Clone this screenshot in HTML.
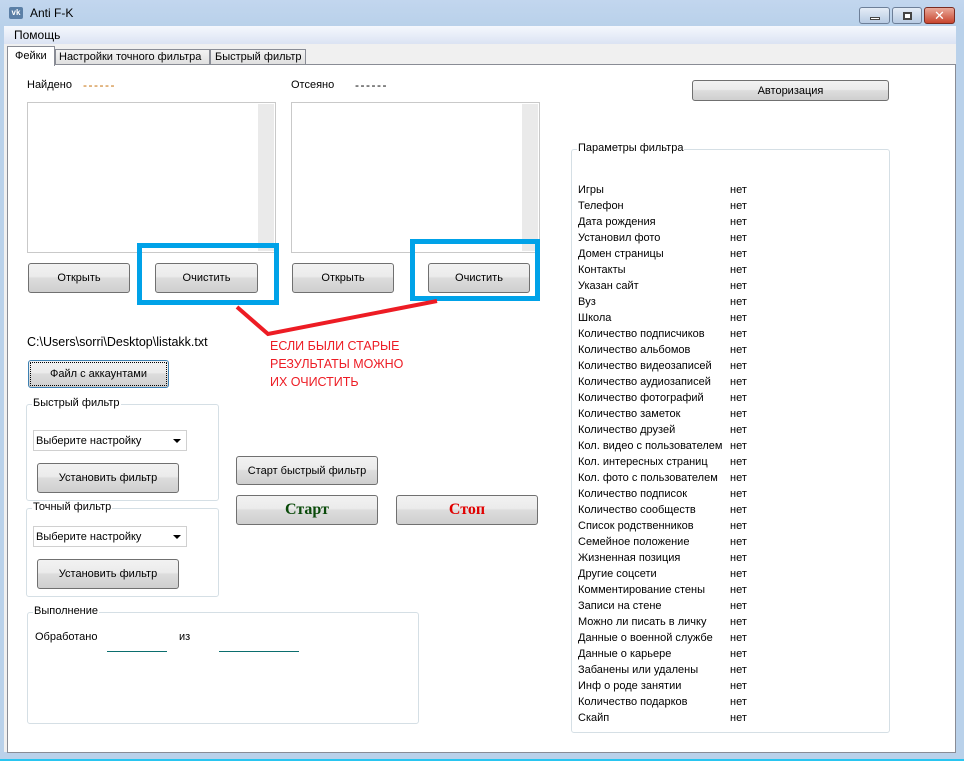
<!DOCTYPE html>
<html><head><meta charset="utf-8"><style>
*{box-sizing:border-box;margin:0;padding:0}
body{width:964px;height:761px;overflow:hidden;background:#b9d1ea;font-family:"Liberation Sans","DejaVu Sans",sans-serif;font-size:11px;color:#000;position:relative}
.a{position:absolute;white-space:nowrap}
.btn{position:absolute;border:1px solid #707070;border-radius:3px;background:linear-gradient(#f2f2f2 0%,#ebebeb 45%,#dddddd 50%,#cfcfcf 100%);display:flex;align-items:center;justify-content:center;font-size:11px;color:#000;white-space:nowrap}
.grp{position:absolute;border:1px solid #d5dfe5;border-radius:3px}
.grp span{position:absolute;top:-8px;left:5px;background:#fff;padding:0 1px;font-size:11px;white-space:nowrap}
.lb{position:absolute;border:1px solid #c9c9c9;background:#fff}
.sb{position:absolute;top:1px;bottom:1px;right:1px;width:16px;background:#eaeaea}
.sel{position:absolute;border:1px solid #d0d0d0;background:#fff;font-size:11px;padding:4px 0 0 2px;white-space:nowrap}
.sel:after{content:"";position:absolute;right:5px;top:8px;border-left:4px solid transparent;border-right:4px solid transparent;border-top:4px solid #000}
.row{position:absolute;left:578px;font-size:11px;white-space:nowrap}
.row b{font-weight:normal;position:absolute;left:152px;top:0}
.blue{position:absolute;border:5px solid #00a2e8}
.red{color:#ed1c24;font-size:12.5px;position:absolute;left:270px;white-space:nowrap}
.dash{letter-spacing:1.5px;font-size:12px}
.tab{position:absolute;top:49px;height:16px;border:1px solid #898c95;background:linear-gradient(#f3f3f3,#e0e0e0);font-size:11px;padding:1px 0 0 3px;white-space:nowrap;overflow:hidden}
</style></head><body>
<div class="a" style="left:0;top:0;width:964px;height:26px;background:linear-gradient(#c2d6ee,#b9d1ea)"></div>
<div class="a" style="left:9px;top:7px;width:14px;height:12px;background:#5b7fa6;border-radius:2px;color:#fff;font-size:8px;font-weight:bold;line-height:12px;text-align:center">vk</div>
<div class="a" style="left:30px;top:6px;font-size:12px">Anti F-K</div>
<div class="a" style="left:859px;top:7px;width:31px;height:17px;border:1px solid #6d7f98;border-radius:3px;background:linear-gradient(#e4ecf6,#b8cbe3)"><div class="a" style="left:10px;top:9px;width:10px;height:3px;background:#fff;border:1px solid #444"></div></div>
<div class="a" style="left:892px;top:7px;width:30px;height:17px;border:1px solid #6d7f98;border-radius:3px;background:linear-gradient(#e4ecf6,#b8cbe3)"><div class="a" style="left:10px;top:4px;width:9px;height:8px;border:2px solid #444;background:#fff"></div></div>
<div class="a" style="left:924px;top:7px;width:31px;height:17px;border:1px solid #7a2c22;border-radius:3px;background:linear-gradient(#e9a99a,#c8452e);color:#fff;font-weight:bold;font-size:13px;text-align:center;line-height:15px">✕</div>
<div class="a" style="left:4px;top:26px;width:952px;height:18px;background:linear-gradient(#f5f8fd,#dbe3f3)"></div>
<div class="a" style="left:14px;top:28px;font-size:12px">Помощь</div>
<div class="a" style="left:4px;top:44px;width:952px;height:708px;background:#f0f0f0"></div>
<div class="a" style="left:7px;top:64px;width:949px;height:689px;background:#fff;border:1px solid #898c95"></div>
<div class="tab" style="left:55px;width:155px">Настройки точного фильтра</div>
<div class="tab" style="left:210px;width:96px;padding-left:4px">Быстрый фильтр</div>
<div class="a" style="left:7px;top:46px;width:48px;height:20px;border:1px solid #898c95;border-bottom:none;background:#fff;font-size:11px;padding:3px 0 0 7px">Фейки</div>

<div class="a" style="left:27px;top:79px">Найдено</div>
<div class="a dash" style="left:83px;top:78px;color:#c46a00">------</div>
<div class="a" style="left:291px;top:79px">Отсеяно</div>
<div class="a dash" style="left:355px;top:78px;color:#000">------</div>
<div class="lb" style="left:27px;top:102px;width:249px;height:151px"><div class="sb"></div></div>
<div class="lb" style="left:291px;top:102px;width:249px;height:151px"><div class="sb"></div></div>

<div class="btn" style="left:28px;top:263px;width:102px;height:30px">Открыть</div>
<div class="btn" style="left:155px;top:263px;width:103px;height:30px">Очистить</div>
<div class="btn" style="left:292px;top:263px;width:102px;height:30px">Открыть</div>
<div class="btn" style="left:428px;top:263px;width:102px;height:30px">Очистить</div>
<div class="blue" style="left:137px;top:243px;width:142px;height:62px"></div>
<div class="blue" style="left:410px;top:239px;width:130px;height:62px"></div>
<svg class="a" style="left:0;top:0" width="964" height="761"><polyline points="237,307 268,334 437,301" fill="none" stroke="#ed1c24" stroke-width="4"/></svg>
<div class="red" style="top:339px">ЕСЛИ БЫЛИ СТАРЫЕ</div>
<div class="red" style="top:357px">РЕЗУЛЬТАТЫ МОЖНО</div>
<div class="red" style="top:375px">ИХ ОЧИСТИТЬ</div>

<div class="a" style="left:27px;top:335px;font-size:12.5px">C:\Users\sorri\Desktop\listakk.txt</div>
<div class="btn" style="left:28px;top:360px;width:141px;height:28px;border:1px solid #3c7fb1;outline:1px dotted #000;outline-offset:-3px">Файл с аккаунтами</div>

<div class="grp" style="left:26px;top:404px;width:193px;height:97px"><span>Быстрый фильтр</span></div>
<div class="sel" style="left:33px;top:430px;width:154px;height:21px">Выберите настройку</div>
<div class="btn" style="left:37px;top:463px;width:142px;height:30px">Установить фильтр</div>
<div class="grp" style="left:26px;top:508px;width:193px;height:89px"><span>Точный фильтр</span></div>
<div class="sel" style="left:33px;top:526px;width:154px;height:21px">Выберите настройку</div>
<div class="btn" style="left:37px;top:559px;width:142px;height:30px">Установить фильтр</div>

<div class="btn" style="left:236px;top:456px;width:142px;height:29px">Старт быстрый фильтр</div>
<div class="btn" style="left:236px;top:495px;width:142px;height:30px;font-family:'Liberation Serif',serif;font-weight:bold;font-size:16px;color:#0a4a0a">Старт</div>
<div class="btn" style="left:396px;top:495px;width:142px;height:30px;font-family:'Liberation Serif',serif;font-weight:bold;font-size:16px;color:#e00000">Стоп</div>

<div class="grp" style="left:27px;top:612px;width:392px;height:112px"><span>Выполнение</span></div>
<div class="a" style="left:35px;top:631px">Обработано</div>
<div class="a" style="left:179px;top:631px">из</div>
<div class="a" style="left:107px;top:651px;width:60px;height:1px;background:#0b6e6e"></div>
<div class="a" style="left:219px;top:651px;width:80px;height:1px;background:#0b6e6e"></div>

<div class="btn" style="left:692px;top:80px;width:197px;height:21px">Авторизация</div>
<div class="grp" style="left:571px;top:149px;width:319px;height:584px"><span>Параметры фильтра</span></div>
<div class="row" style="top:184px">Игры<b>нет</b></div>
<div class="row" style="top:200px">Телефон<b>нет</b></div>
<div class="row" style="top:216px">Дата рождения<b>нет</b></div>
<div class="row" style="top:232px">Установил фото<b>нет</b></div>
<div class="row" style="top:248px">Домен страницы<b>нет</b></div>
<div class="row" style="top:264px">Контакты<b>нет</b></div>
<div class="row" style="top:280px">Указан сайт<b>нет</b></div>
<div class="row" style="top:296px">Вуз<b>нет</b></div>
<div class="row" style="top:312px">Школа<b>нет</b></div>
<div class="row" style="top:328px">Количество подписчиков<b>нет</b></div>
<div class="row" style="top:344px">Количество альбомов<b>нет</b></div>
<div class="row" style="top:360px">Количество видеозаписей<b>нет</b></div>
<div class="row" style="top:376px">Количество аудиозаписей<b>нет</b></div>
<div class="row" style="top:392px">Количество фотографий<b>нет</b></div>
<div class="row" style="top:408px">Количество заметок<b>нет</b></div>
<div class="row" style="top:424px">Количество друзей<b>нет</b></div>
<div class="row" style="top:440px">Кол. видео с пользователем<b>нет</b></div>
<div class="row" style="top:456px">Кол. интересных страниц<b>нет</b></div>
<div class="row" style="top:472px">Кол. фото с пользователем<b>нет</b></div>
<div class="row" style="top:488px">Количество подписок<b>нет</b></div>
<div class="row" style="top:504px">Количество сообществ<b>нет</b></div>
<div class="row" style="top:520px">Список родственников<b>нет</b></div>
<div class="row" style="top:536px">Семейное положение<b>нет</b></div>
<div class="row" style="top:552px">Жизненная позиция<b>нет</b></div>
<div class="row" style="top:568px">Другие соцсети<b>нет</b></div>
<div class="row" style="top:584px">Комментирование стены<b>нет</b></div>
<div class="row" style="top:600px">Записи на стене<b>нет</b></div>
<div class="row" style="top:616px">Можно ли писать в личку<b>нет</b></div>
<div class="row" style="top:632px">Данные о военной службе<b>нет</b></div>
<div class="row" style="top:648px">Данные о карьере<b>нет</b></div>
<div class="row" style="top:664px">Забанены или удалены<b>нет</b></div>
<div class="row" style="top:680px">Инф о роде занятии<b>нет</b></div>
<div class="row" style="top:696px">Количество подарков<b>нет</b></div>
<div class="row" style="top:712px">Скайп<b>нет</b></div>
<div class="a" style="left:0;top:759px;width:964px;height:2px;background:#29c5f0"></div>
</body></html>
